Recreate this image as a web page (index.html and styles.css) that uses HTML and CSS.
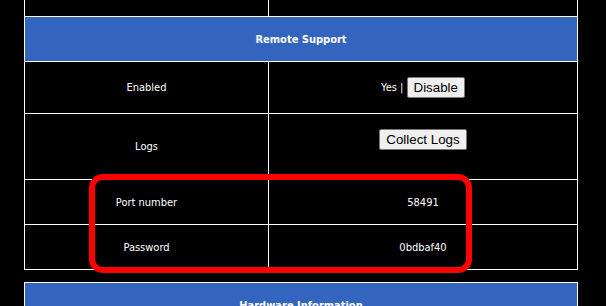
FILE: index.html
```html
<!DOCTYPE html>
<html>
<head>
<meta charset="utf-8">
<link rel="stylesheet" href="styles.css">
</head>
<body>
<div class="page">
  <div class="panel">
    <div class="row row-top">
      <div class="cell cell-left"></div>
      <div class="cell"></div>
    </div>
    <div class="row header">Remote Support</div>
    <div class="row row-enabled">
      <div class="cell cell-left">Enabled</div>
      <div class="cell">Yes |&nbsp;<button class="btn">Disable</button></div>
    </div>
    <div class="row row-logs">
      <div class="cell cell-left">Logs</div>
      <div class="cell cell-stack"><button class="btn">Collect Logs</button><span class="spacer"></span></div>
    </div>
    <div class="row row-info">
      <div class="cell cell-left">Port number</div>
      <div class="cell">58491</div>
    </div>
    <div class="row row-info">
      <div class="cell cell-left">Password</div>
      <div class="cell">0bdbaf40</div>
    </div>
  </div>
  <div class="panel panel-next">
    <div class="row header">Hardware Information</div>
  </div>
  <div class="highlight"></div>
</div>
</body>
</html>
```

FILE: styles.css
```css
html, body {
  margin: 0;
  padding: 0;
  background: #000;
}
body {
  width: 606px;
  height: 306px;
  overflow: hidden;
  font-family: "DejaVu Sans Condensed", "Liberation Sans Narrow", sans-serif;
  font-stretch: condensed;
  font-size: 11px;
  color: #fff;
}
.page {
  position: relative;
  padding-left: 24px;
}
.panel {
  width: 552px;
  border-left: 1px solid #fff;
  border-right: 1px solid #fff;
}
.panel-next {
  margin-top: 12px;
  border-top: 1px solid #fff;
}
.row {
  display: grid;
  grid-template-columns: 244px 1fr;
  border-bottom: 1px solid #fff;
}
.row-top { height: 16px; }
.header {
  display: flex;
  align-items: center;
  justify-content: center;
  height: 44px;
  background: #3465be;
  font-weight: bold;
}
.row-enabled { height: 51px; }
.row-logs { height: 65px; }
.row-info { height: 44px; }
.cell {
  display: flex;
  align-items: center;
  justify-content: center;
}
.cell-left {
  border-right: 1px solid #fff;
}
.cell-stack {
  flex-direction: column;
}
.spacer {
  display: block;
  height: 15px;
}
.btn {
  font-family: "Liberation Sans", Arial, sans-serif;
  font-size: 13.333px;
  height: 21px;
  padding: 1px 6px;
  background: #efefef;
  color: #000;
  border: 1px solid #767676;
  border-radius: 2px;
}
.highlight {
  position: absolute;
  left: 89px;
  top: 174px;
  width: 371px;
  height: 87px;
  border: 6px solid #ff0000;
  border-radius: 14px;
}
```
